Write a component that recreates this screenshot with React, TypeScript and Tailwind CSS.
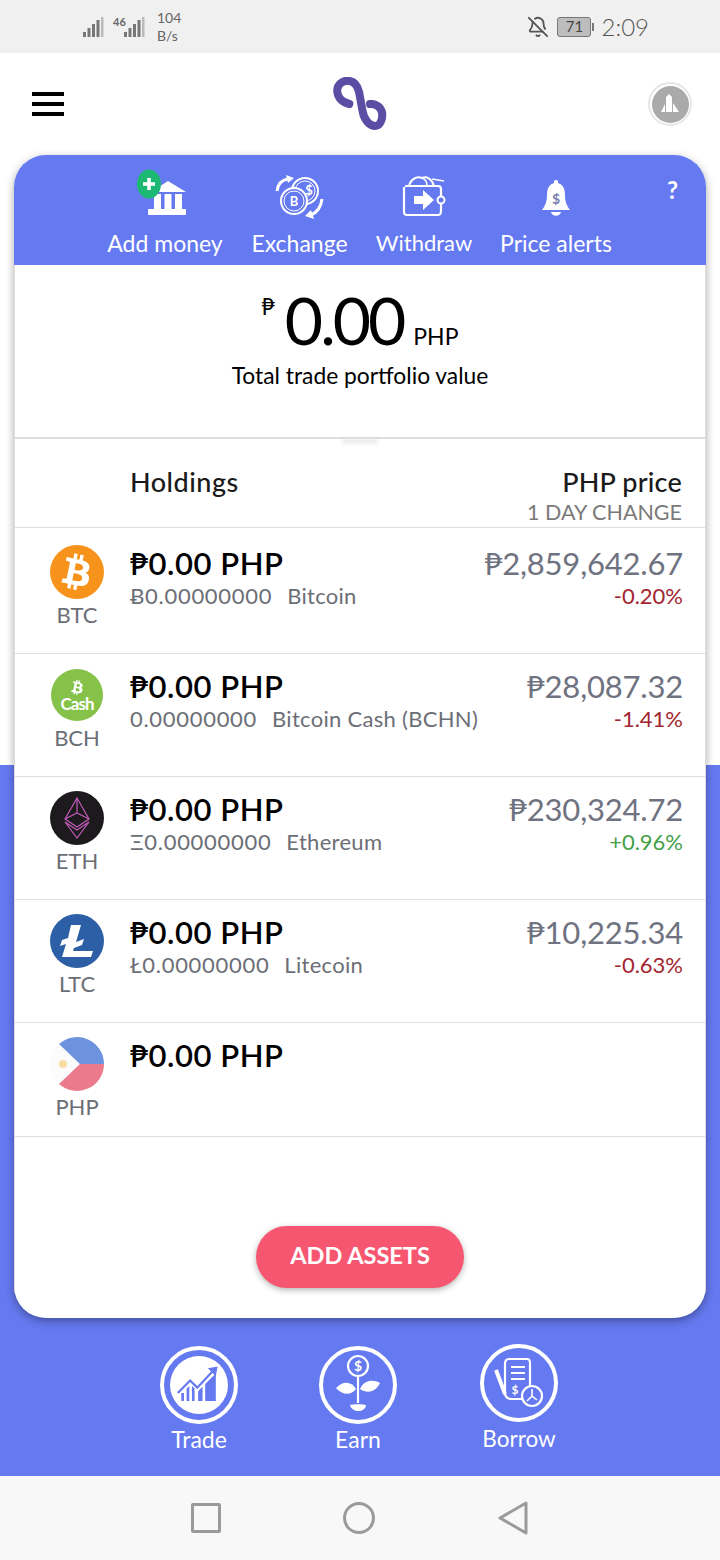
import { BellOff } from "lucide-react";
import { FaBtc } from "react-icons/fa";

const font = { fontFamily: "Lato, 'Open Sans', 'DejaVu Sans', sans-serif" };

const BLUE = "#6579f0";

const StatusBars = () => (
  <svg width="21" height="20" viewBox="0 0 21 20" className="block">
    <rect x="0" y="15" width="3" height="5" fill="#777" />
    <rect x="4.5" y="11" width="3" height="9" fill="#777" />
    <rect x="9" y="7" width="3" height="13" fill="#777" />
    <rect x="13.5" y="3" width="3" height="17" fill="#777" />
    <rect x="18" y="0" width="2.5" height="20" fill="#bbb" />
  </svg>
);

const BankIcon = () => (
  <svg width="54" height="50" viewBox="0 0 54 50" className="block">
    <path d="M15 23 L32 12 L50 23 Z" fill="#fff" />
    <rect x="18" y="25" width="7" height="15" fill="#fff" />
    <rect x="28.5" y="25" width="7" height="15" fill="#fff" />
    <rect x="39" y="25" width="7" height="15" fill="#fff" />
    <rect x="12" y="40" width="38" height="6" rx="1" fill="#fff" />
    <ellipse cx="13" cy="15" rx="12" ry="14.5" fill="#1db974" />
    <path d="M13 9v12M7 15h12" stroke="#fff" strokeWidth="3.5" />
  </svg>
);

const ExchangeIcon = () => (
  <svg width="50" height="46" viewBox="0 0 50 46" fill="none" stroke="#fff" className="block">
    <circle cx="30" cy="17" r="13" strokeWidth="2" fill={BLUE} />
    <circle cx="30" cy="17" r="10" strokeWidth="1" />
    <text x="34" y="21" fontSize="13" fontWeight="700" fill="#fff" stroke="none" textAnchor="middle">$</text>
    <circle cx="19" cy="27" r="13" strokeWidth="2" fill={BLUE} />
    <circle cx="19" cy="27" r="10" strokeWidth="1" />
    <text x="19" y="32" fontSize="13" fontWeight="700" fill="#fff" stroke="none" textAnchor="middle">B</text>
    <path d="M2 17 C3 10 6 6 13 5" strokeWidth="3" />
    <path d="M11 1 L19 4 L13 9 Z" fill="#fff" stroke="none" />
    <path d="M47 25 C46 33 43 38 36 41" strokeWidth="3" />
    <path d="M39 45 L30 42 L36 36 Z" fill="#fff" stroke="none" />
  </svg>
);

const WithdrawIcon = () => (
  <svg width="44" height="44" viewBox="0 0 44 44" fill="none" stroke="#fff" className="block">
    <path d="M3 12 H36 Q39 12 39 15 V37 Q39 41 36 41 H5 Q2 41 2 38 V13" strokeWidth="2.2" />
    <path d="M7 12 C9 4 16 2 20 4 C25 2 30 5 32 12" strokeWidth="2" />
    <path d="M20 4 C23 5 25 8 25 12" strokeWidth="1.5" />
    <path d="M30 5 L42 7" strokeWidth="1.5" />
    <circle cx="39" cy="26" r="3.5" strokeWidth="2" fill={BLUE} />
    <path d="M12 22 H21 V16 L32 26 L21 36 V30 H12 Z" fill="#fff" stroke="none" />
  </svg>
);

const AlertIcon = () => (
  <svg width="30" height="38" viewBox="0 0 30 38" className="block">
    <rect x="13" y="0" width="4" height="5" rx="1.5" fill="#fff" />
    <path d="M15 3 C8 3 6 9 6 15 C6 22 4 26 1 30 H29 C26 26 24 22 24 15 C24 9 22 3 15 3 Z" fill="#fff" />
    <path d="M10 32 H20 C19 37 11 37 10 32 Z" fill="#fff" />
    <text x="15" y="24" fontSize="14" fontWeight="700" fill="#7a7fb0" textAnchor="middle">$</text>
  </svg>
);

const TradeIcon = () => (
  <svg width="46" height="46" viewBox="0 0 52 52" fill={BLUE} className="block">
    <path d="M2 35 L16 21 L24 29 L42 10" fill="none" stroke={BLUE} strokeWidth="2.5" />
    <path d="M36 7 L47 5 L45 16 Z" />
    <path d="M12 30 L15 27 V44 H12 Z M18 27 L21 30 V44 H18 Z" />
    <path d="M25 33 L30 28 V44 H25 Z" />
    <path d="M33 25 L45 13 V44 H33 Z" />
    <rect x="6" y="35" width="3" height="9" />
  </svg>
);

const EarnIcon = () => (
  <svg width="46" height="64" viewBox="0 0 46 64" fill="none" stroke="#fff" className="block">
    <circle cx="23" cy="13" r="10" strokeWidth="2.2" />
    <text x="23" y="18" fontSize="14" fontWeight="700" fill="#fff" stroke="none" textAnchor="middle">$</text>
    <path d="M23 23 V50" strokeWidth="2.2" />
    <path d="M21 36 C16 28 8 28 1 35 C7 42 16 43 21 36 Z" fill="#fff" stroke="none" />
    <path d="M25 36 C29 27 38 26 45 30 C41 39 32 41 25 36 Z" fill="#fff" stroke="none" />
    <path d="M15 52 C18 51 28 51 31 52 C30 60 17 60 15 52 Z" fill="#fff" stroke="none" />
  </svg>
);

const BorrowIcon = () => (
  <svg width="50" height="54" viewBox="0 0 50 54" fill="none" stroke="#fff" className="block">
    <path d="M2 14 L11 38" strokeWidth="4" />
    <path d="M11 8 Q11 3 15 3 H33 Q36 3 36 7 V33" strokeWidth="2.2" />
    <path d="M11 8 V38 Q12 43 18 43 H30" strokeWidth="2.2" />
    <path d="M17 11 H31 M17 17 H31 M17 23 H31" strokeWidth="2.2" />
    <text x="21" y="38" fontSize="12" fontWeight="700" fill="#fff" stroke="none" textAnchor="middle">$</text>
    <circle cx="38" cy="40" r="10" strokeWidth="2.2" fill={BLUE} />
    <path d="M38 33 V40 L43 44 M38 40 L33 45" strokeWidth="1.6" />
  </svg>
);

const Logo = () => (
  <svg width="54" height="54" viewBox="0 0 54 54" fill="none" className="block">
    <path
      d="M16.3 27 C7 24.7 3.7 18 4.3 13 C4.3 7.3 9.7 3.7 14.3 3.7 C20.3 3.7 24.3 8 26 14.7 L29.7 34.7 C31 43 37 49 42 49 C47 49 49.3 43 49.3 38 C49.3 31.3 43.7 26.3 37 27"
      stroke="#5b4ca4"
      strokeWidth="8"
      strokeLinecap="round"
    />
  </svg>
);

const Ph = () => (
  <svg width="54" height="54" viewBox="0 0 54 54" className="block">
    <circle cx="27" cy="27" r="27" fill="#fbfbfb" />
    <path d="M9 7 A27 27 0 0 1 54 27 H30 Z" fill="#6d93df" />
    <path d="M9 47 A27 27 0 0 0 54 27 H30 Z" fill="#ec7a8d" />
    <circle cx="13" cy="27" r="4" fill="#f6dfa0" />
  </svg>
);

const coins = [
  {
    sym: "BTC",
    height: "h-[126px] pt-[17px]",
    top: "top-[16px]",
    amount: "Ƀ0.00000000",
    name: "Bitcoin",
    price: "₱2,859,642.67",
    change: "-0.20%",
    color: "text-[#a2252f]",
    icon: (
      <div className="flex h-[54px] w-[54px] items-center justify-center rounded-full bg-[#f7931a]">
        <FaBtc className="rotate-[12deg] text-[36px] text-[#fff]" />
      </div>
    ),
  },
  {
    sym: "BCH",
    height: "h-[123px] pt-[14px]",
    top: "top-[13px]",
    amount: "0.00000000",
    name: "Bitcoin Cash (BCHN)",
    price: "₱28,087.32",
    change: "-1.41%",
    color: "text-[#a2252f]",
    icon: (
      <div className="flex h-[52px] w-[52px] flex-col items-center justify-center rounded-full bg-[#86c24a] text-white">
        <FaBtc className="mt-0.5 rotate-[12deg] text-[15px]" />
        <span className="text-[17px] leading-[18px] font-bold tracking-[-1px]">Cash</span>
      </div>
    ),
  },
  {
    sym: "ETH",
    height: "h-[123px] pt-[14px]",
    top: "top-[13px]",
    amount: "Ξ0.00000000",
    name: "Ethereum",
    price: "₱230,324.72",
    change: "+0.96%",
    color: "text-[#43a047]",
    icon: (
      <div className="flex h-[54px] w-[54px] items-center justify-center rounded-full bg-[#1c1a1d]">
        <svg width="28" height="42" viewBox="0 0 28 42" fill="none" stroke="#c45cbc" strokeWidth="1.2">
          <path d="M14 1 L26 22 L14 30 L2 22 Z" />
          <path d="M14 1 V16 M2 22 L14 16 L26 22" />
          <path d="M2 25 L14 41 L26 25 L14 33 Z" />
        </svg>
      </div>
    ),
  },
  {
    sym: "LTC",
    height: "h-[123px] pt-[14px]",
    top: "top-[13px]",
    amount: "Ł0.00000000",
    name: "Litecoin",
    price: "₱10,225.34",
    change: "-0.63%",
    color: "text-[#a2252f]",
    icon: (
      <div className="flex h-[54px] w-[54px] items-center justify-center rounded-full bg-[#2d5fa6]">
        <svg width="36" height="34" viewBox="0 0 36 34" fill="#fff">
          <path d="M12 1 H22 L17 18 L25 15 L23 21 L15 24 L14 27 H34 L32 33 H3 L7 20 L1 22 L3 16 L9 14 Z" />
        </svg>
      </div>
    ),
  },
];

const CoinRow = ({
  sym,
  icon,
  height,
  children,
}: {
  sym: string;
  icon: React.ReactNode;
  height: string;
  children?: React.ReactNode;
}) => (
  <div className={`flex ${height} border-b border-[#dedede] pr-[23px] pl-[35px]`}>
    <div className="flex w-[54px] shrink-0 flex-col items-center">
      <div className="flex h-[54px] items-center">{icon}</div>
      <span className="mt-[2px] text-[22px] leading-[28px] text-[#6c6e76]">{sym}</span>
    </div>
    <div className="-mt-[1px] ml-[26px] min-w-0 flex-1">
      <p className="text-[31px] leading-[38px] font-semibold tracking-[0.55px] text-black">₱0.00 PHP</p>
      {children}
    </div>
  </div>
);

export default function App() {
  return (
    <div className="flex h-[1560px] w-[720px] flex-col overflow-hidden bg-white" style={font}>
      {/* status bar */}
      <div className="flex h-[53px] shrink-0 items-center bg-[#f0f0f0] pr-[71px] pl-[83px] text-[#666]">
        <StatusBars />
        <div className="relative ml-[9px] flex items-center">
          <span className="absolute top-[-3px] left-0 text-[11px] font-bold">46</span>
          <div className="ml-[11px]">
            <StatusBars />
          </div>
        </div>
        <div className="ml-[12px] flex flex-col text-[14px] leading-[18px]">
          <span>104</span>
          <span>B/s</span>
        </div>
        <BellOff className="mr-[8px] ml-auto h-[22px] w-[22px] text-[#555]" strokeWidth={2} />
        <div className="flex items-center">
          <div className="flex h-[20px] w-[34px] items-center justify-center rounded-[3px] border border-[#777] bg-[#bdbdbd] text-[15px] text-[#444]">
            71
          </div>
          <div className="ml-[1px] h-[8px] w-[2px] bg-[#777]" />
        </div>
        <span className="ml-[7px] text-[24px] leading-none font-light text-[#555]">2:09</span>
      </div>

      {/* main */}
      <div className="flex flex-1 flex-col bg-[linear-gradient(#ffffff_712px,#6579f0_712px)]">
        <div className="flex h-[102px] shrink-0 items-center justify-between pr-[28px] pl-[32px]">
          <div className="flex w-[32px] flex-col gap-[6px]">
            <div className="h-[4px] bg-black" />
            <div className="h-[4px] bg-black" />
            <div className="h-[4px] bg-black" />
          </div>
          <div className="ml-[8px]">
            <Logo />
          </div>
          <div className="flex h-[44px] w-[44px] items-center justify-center rounded-full border-2 border-[#e6e6e6] bg-white">
            <div className="flex h-[37px] w-[37px] items-center justify-center rounded-full bg-[#aaaaaa]">
              <svg width="24" height="24" viewBox="0 0 24 24" fill="#fff">
                <path d="M11 2 L14 5 V20 H8 V5 Z M3 20 L7 12 V20 Z M15 11 L21 20 H15 Z" />
              </svg>
            </div>
          </div>
        </div>

        {/* card */}
        <div className="mx-[14px] flex h-[1163px] shrink-0 flex-col overflow-hidden rounded-[32px] bg-white shadow-[0_3px_8px_rgba(0,0,0,0.35)]">
          <div className="flex h-[110px] shrink-0 bg-[#6579f0] pl-[93px] text-white">
            <div className="flex w-[116px] flex-col items-center">
              <div className="mt-[14px] -ml-[4px] flex h-[50px] items-start">
                <BankIcon />
              </div>
              <span className="mt-[10px] text-[23px] leading-[28px] whitespace-nowrap">Add money</span>
            </div>
            <div className="ml-[28px] flex w-[97px] flex-col items-center">
              <div className="mt-[19px] flex h-[45px] items-start">
                <ExchangeIcon />
              </div>
              <span className="mt-[10px] text-[23px] leading-[28px] whitespace-nowrap">Exchange</span>
            </div>
            <div className="ml-[29px] flex w-[94px] flex-col items-center">
              <div className="mt-[19px] flex h-[45px] items-start">
                <WithdrawIcon />
              </div>
              <span className="mt-[10px] text-[22px] leading-[28px] whitespace-nowrap">Withdraw</span>
            </div>
            <div className="ml-[29px] flex w-[112px] flex-col items-center">
              <div className="mt-[25px] flex h-[39px] items-start">
                <AlertIcon />
              </div>
              <span className="mt-[10px] text-[23px] leading-[28px] whitespace-nowrap">Price alerts</span>
            </div>
            <span className="mt-[20px] ml-[55px] text-[24px] leading-[30px] font-bold">?</span>
          </div>

          <div className="flex flex-1 flex-col border-x border-[#dedede]">
            {/* balance */}
            <div className="relative flex h-[174px] shrink-0 flex-col items-center border-b-2 border-[#dedede] text-black">
              <div className="mt-[15px] flex h-[80px] items-end">
                <span className="mr-[10px] mb-[42px] text-[23px] leading-none">₱</span>
                <span className="text-[66px] leading-[80px] font-normal tracking-[-3px]">0.00</span>
                <span className="mb-[10px] ml-[10px] text-[23px] leading-[28px]">PHP</span>
              </div>
              <p className="text-[22.8px] leading-[30px]">Total trade portfolio value</p>
              <div className="absolute bottom-[-2px] left-1/2 h-[2px] w-[36px] -translate-x-1/2 rounded-full shadow-[0_3px_4px_rgba(0,0,0,0.2)]" />
            </div>

            {/* holdings header */}
            <div className="flex h-[89px] shrink-0 justify-between border-b border-[#dedede] pt-[27px] pr-[23px] pl-[115px]">
              <span className="text-[27px] leading-[32px] font-medium tracking-[0.5px] text-[#1a1a1a]">Holdings</span>
              <div className="flex flex-col items-end">
                <span className="text-[27px] leading-[32px] font-medium tracking-[0.2px] text-[#1a1a1a]">PHP price</span>
                <span className="text-[21.5px] leading-[28px] font-normal text-[#7a7a7a]">1 DAY CHANGE</span>
              </div>
            </div>

            {coins.map((c) => (
              <div key={c.sym} className="relative">
                <CoinRow sym={c.sym} icon={c.icon} height={c.height}>
                  <p className="text-[22px] leading-[28px] whitespace-nowrap text-[#6c6e76]">
                    <span className="tracking-[0.7px]">{c.amount}</span>
                    <span className="ml-[15px] tracking-[0.3px]">{c.name}</span>
                  </p>
                </CoinRow>
                <div className={`absolute ${c.top} right-[22px] flex flex-col items-end`}>
                  <span className="text-[31px] leading-[38px] font-normal tracking-[-0.2px] text-[#6f7280]">{c.price}</span>
                  <span className={`text-[22px] leading-[27px] ${c.color}`}>{c.change}</span>
                </div>
              </div>
            ))}
            <CoinRow sym="PHP" icon={<Ph />} height="h-[114px] pt-[14px]" />

            <div className="flex flex-1 justify-center pt-[89px]">
              <div className="flex h-[62px] w-[208px] items-center justify-center rounded-full bg-[#f6566f] pb-[2px] text-[23.5px] font-bold text-white shadow-[0_2px_6px_rgba(0,0,0,0.3)]">
                ADD ASSETS
              </div>
            </div>
          </div>
        </div>

        {/* bottom tabs */}
        <div className="flex flex-1 justify-center gap-[81px] pt-[28px] pr-[2px] text-white">
          <div className="flex w-[78px] flex-col items-center">
            <div className="flex h-[78px] w-[78px] items-center justify-center rounded-full border-[4px] border-white">
              <div className="flex h-[58px] w-[58px] items-center justify-center rounded-full bg-white">
                <TradeIcon />
              </div>
            </div>
            <span className="text-[23px] leading-[30px]">Trade</span>
          </div>
          <div className="flex w-[78px] flex-col items-center">
            <div className="flex h-[78px] w-[78px] items-center justify-center rounded-full border-[4px] border-white">
              <EarnIcon />
            </div>
            <span className="text-[23px] leading-[30px]">Earn</span>
          </div>
          <div className="-mt-[2px] ml-[2px] flex w-[78px] flex-col items-center">
            <div className="flex h-[78px] w-[78px] items-center justify-center rounded-full border-[4px] border-white">
              <BorrowIcon />
            </div>
            <span className="mt-[2px] text-[22.5px] leading-[30px]">Borrow</span>
          </div>
        </div>
      </div>

      {/* android nav */}
      <div className="flex h-[84px] shrink-0 items-center justify-center gap-[122px] bg-[#f8f8f8]">
        <div className="h-[30px] w-[30px] rounded-[2px] border-[3px] border-[#9a9a9a]" />
        <div className="h-[32px] w-[32px] rounded-full border-[3px] border-[#9a9a9a]" />
        <svg width="32" height="34" viewBox="0 0 32 34" fill="none" stroke="#9a9a9a" strokeWidth="3" strokeLinejoin="round">
          <path d="M29 2 V32 L3 17 Z" />
        </svg>
      </div>
    </div>
  );
}
